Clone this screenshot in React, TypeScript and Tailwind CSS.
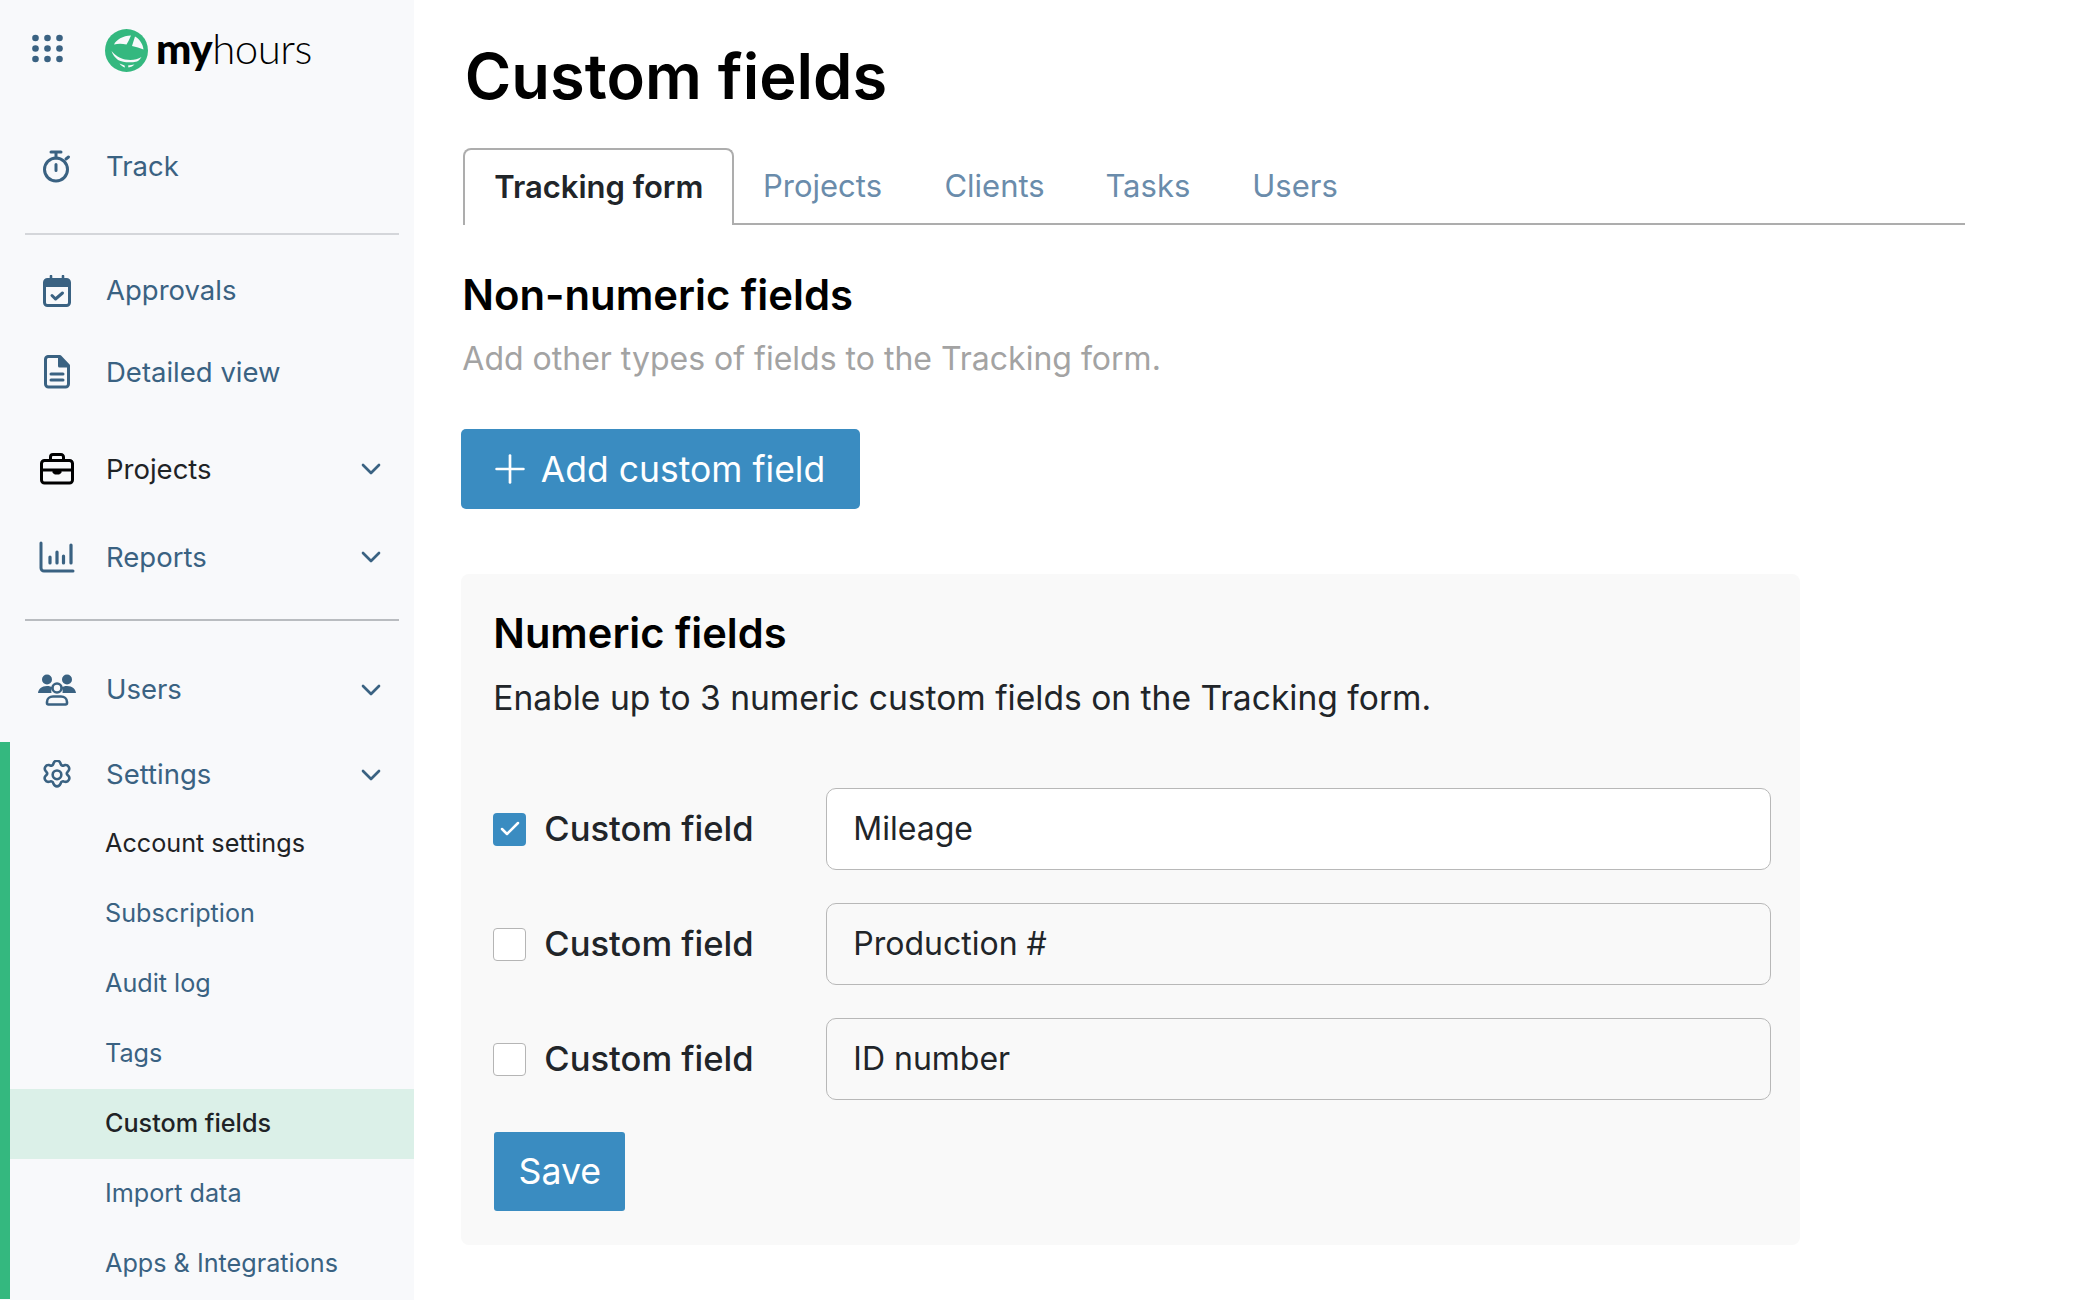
import { ChevronDown, Check, Plus } from "lucide-react";
import { ReactNode } from "react";

const slate = "#3a6282";

function GridIcon() {
  const pts = [0, 1, 2];
  return (
    <svg width="32" height="32" viewBox="0 0 32 32" fill={slate}>
      {pts.map((r) => pts.map((c) => <circle key={`${r}-${c}`} cx={3.5 + c * 12} cy={4 + r * 10.5} r="3.3" />))}
    </svg>
  );
}

function Logo() {
  const bg = "#f8f9fb";
  return (
    <svg width="43" height="43" viewBox="0 0 43 43">
      <circle cx="21.5" cy="21.5" r="21.5" fill="#34b87f" />
      <path d="M9 15.500C11 11 18 6.500 26 6.500L23.500 12 21.500 15.500C17 14.500 13 14.500 9 15.500z" fill={bg} />
      <path d="M30 7.500C34.500 10 38 15 38.500 20.500C35 19 31 18 27 17z" fill={bg} />
      <path d="M6.500 22C10 26 15 29.500 20 30.500C26 31.500 32 31 36.500 28C35 30 34 31.500 32 32.500C25 34 18 33.500 13 31C10 28.500 7.500 25.500 6.500 22z" fill={bg} />
      <path d="M14.500 34.500L19.500 36.500 20 38.500C18 38 16 36.500 14.500 34.500zM23 36.500L29.500 35.500C28 37 26 38 23.500 38.500z" fill={bg} />
    </svg>
  );
}

function Timer() {
  return (
    <svg width="30" height="34" viewBox="0 0 30 34" fill="none" stroke={slate} strokeWidth="3" strokeLinecap="round">
      <circle cx="14" cy="19.500" r="11.500" />
      <path d="M9 2h10M14 2v6M14 14.500v6M24 9l2.500-2" />
    </svg>
  );
}

function CalendarCheck() {
  return (
    <svg width="28" height="32" viewBox="0 0 28 32" fill="none">
      <path d="M8 1v5M20 1v5" stroke={slate} strokeWidth="2.600" strokeLinecap="round" />
      <rect x="1.500" y="4.500" width="25" height="26" rx="3" stroke={slate} strokeWidth="3" />
      <path d="M2 5h24v7H2z" fill={slate} />
      <path d="M9 20.500l3.500 3.500 7-6" stroke={slate} strokeWidth="3" strokeLinecap="round" strokeLinejoin="round" />
    </svg>
  );
}

function DocIcon() {
  return (
    <svg width="26" height="34" viewBox="0 0 26 34" fill="none" stroke={slate} strokeWidth="3" strokeLinejoin="round">
      <path d="M4 1.500h12l8.500 9V29a3 3 0 0 1-3 3H4.500a3 3 0 0 1-3-3V4.500a3 3 0 0 1 2.500-3z" />
      <path d="M15.500 2v9h9" fill={slate} />
      <path d="M7 19h12M7 25h12" strokeLinecap="round" />
    </svg>
  );
}

function Briefcase() {
  return (
    <svg width="34" height="32" viewBox="0 0 34 32" fill="none" stroke="#000" strokeWidth="3" strokeLinejoin="round">
      <rect x="1.500" y="7.500" width="31" height="22.500" rx="3" />
      <path d="M10.500 7V4a2.500 2.500 0 0 1 2.500-2.500h8A2.500 2.500 0 0 1 23.500 4v3" />
      <path d="M2 17h30" />
      <path d="M13 17h8v2.500l-1.500 1.500h-5L13 19.500z" fill="#000" strokeWidth="1" />
    </svg>
  );
}

function Chart() {
  return (
    <svg width="36" height="32" viewBox="0 0 36 32" fill="none" stroke={slate} strokeLinecap="round">
      <path d="M2 2v25a3 3 0 0 0 3 3h29" strokeWidth="3" />
      <path d="M11 16v6M18 11v11M24.500 15v7M32 4v18" strokeWidth="3.200" />
    </svg>
  );
}

function UsersIcon() {
  return (
    <svg width="38" height="32" viewBox="0 0 38 32" fill="none">
      <circle cx="9" cy="5.500" r="5" fill={slate} />
      <circle cx="29" cy="5.500" r="5" fill={slate} />
      <path d="M0 19c.5-4 3.500-7 9-7 2.500 0 4 .5 5.500 1.500-1 1.500-1.500 3-1 5.500z" fill={slate} />
      <path d="M38 19c-.5-4-3.500-7-9-7-2.500 0-4 .5-5.500 1.500 1 1.500 1.500 3 1 5.500z" fill={slate} />
      <circle cx="19" cy="14" r="4.500" stroke={slate} strokeWidth="2.600" />
      <path d="M9 29v-1c0-3.500 3-5.500 6-5.500h8c3 0 6 2 6 5.500v1c0 1-.8 1.500-1.500 1.500h-17C9.800 30.500 9 30 9 29z" stroke={slate} strokeWidth="2.600" />
    </svg>
  );
}

function Gear() {
  return (
    <svg width="28" height="31" viewBox="2.500 0.500 19 21.500" fill="none" stroke={slate} strokeWidth="1.800" strokeLinecap="round" strokeLinejoin="round">
      <path d="M9.670 2.600a2.500 2.500 0 0 1 4.660 0l.3.800a1.600 1.600 0 0 0 2.100.9l.9-.3a2.500 2.500 0 0 1 2.300 4l-.6.700a1.600 1.600 0 0 0 0 2.200l.6.600a2.500 2.500 0 0 1-2.300 4.100l-.9-.2a1.600 1.600 0 0 0-2.100 1l-.3.800a2.500 2.500 0 0 1-4.660 0l-.3-.8a1.600 1.600 0 0 0-2.100-1l-.9.200a2.500 2.500 0 0 1-2.300-4.100l.6-.6a1.600 1.600 0 0 0 0-2.200l-.6-.7a2.500 2.500 0 0 1 2.300-4l.9.300a1.600 1.600 0 0 0 2.100-.9z" />
      <circle cx="12" cy="10.800" r="3" />
    </svg>
  );
}

function NavRow({ icon, label, dark, chevron, h }: { icon: ReactNode; label: string; dark?: boolean; chevron?: boolean; h: string }) {
  return (
    <div className={`flex items-center pl-[37px] pr-[27px] ${h}`}>
      <div className="flex w-[40px] justify-center">{icon}</div>
      <span className={`ml-[29px] flex-1 text-[27.5px] ${dark ? "text-[#1f2326]" : "text-[#3a6282]"}`}>{label}</span>
      {chevron && <ChevronDown className="h-[32px] w-[32px] text-[#3a6282]" strokeWidth={2} />}
    </div>
  );
}

const subItems = ["Account settings", "Subscription", "Audit log", "Tags", "Custom fields", "Import data", "Apps & Integrations"];

function Sidebar() {
  return (
    <aside className="h-[1300px] w-[414px] shrink-0 overflow-hidden bg-[#f8f9fb]">
      <div className="flex h-[100px] items-center pl-[32px]">
        <GridIcon />
        <div className="ml-[41px]"><Logo /></div>
        <div className="-mt-[5px] ml-[8px] flex items-baseline font-['Lato',sans-serif] text-[42px] leading-none tracking-[-0.5px] text-black">
          <span className="font-black">my</span>
          <span className="font-light">hours</span>
        </div>
      </div>
      <NavRow h="h-[133px]" icon={<Timer />} label="Track" />
      <div className="ml-[25px] h-[2px] w-[374px] bg-[#d4d6da]" />
      <div className="h-[14px]" />
      <NavRow h="h-[83.3px]" icon={<CalendarCheck />} label="Approvals" />
      <NavRow h="h-[79.7px]" icon={<DocIcon />} label="Detailed view" />
      <div className="h-[13.5px]" />
      <NavRow h="h-[88px]" icon={<Briefcase />} label="Projects" dark chevron />
      <NavRow h="h-[88px]" icon={<Chart />} label="Reports" chevron />
      <div className="ml-[25px] mt-[17.5px] h-[2px] w-[374px] bg-[#b9bcc0]" />
      <div className="h-[37px]" />
      <NavRow h="h-[64px]" icon={<UsersIcon />} label="Users" chevron />
      <div className="mt-[19.7px] border-l-[10px] border-[#34b87f]">
        <div className="-ml-[10px]">
          <NavRow h="h-[66.7px]" icon={<Gear />} label="Settings" chevron />
        </div>
        {subItems.map((item) => (
          <div
            key={item}
            className={`flex h-[70.1px] items-center pl-[95px] text-[25.2px] ${
              item === "Custom fields" ? "bg-[#dbf0e8] font-medium text-[#1f2326]" : item === "Account settings" ? "text-[#1f2326]" : "text-[#3a6282]"
            }`}
          >
            {item}
          </div>
        ))}
      </div>
    </aside>
  );
}

const tabs = ["Projects", "Clients", "Tasks", "Users"];

function FieldRow({ checked, value, white }: { checked?: boolean; value: string; white?: boolean }) {
  return (
    <div className="flex h-[82px] items-center">
      {checked ? (
        <div className="flex h-[33px] w-[33px] items-center justify-center rounded-[4px] bg-[#3a8cc1]">
          <Check className="h-[24px] w-[24px] text-white" strokeWidth={2.5} />
        </div>
      ) : (
        <div className="h-[33px] w-[33px] rounded-[4px] border-[1.5px] border-[#b5b5b5] bg-white" />
      )}
      <span className="ml-[18px] -mt-[1px] w-[282px] text-[34.6px] font-[550] text-[#212529]">Custom field</span>
      <div className={`flex h-[82px] w-[945px] items-center rounded-[10px] border-[1.5px] border-[#b8b8b8] pl-[26px] text-[32px] text-[#212529] ${white ? "bg-white" : ""}`}>
        {value}
      </div>
    </div>
  );
}

export default function App() {
  return (
    <div className="flex min-h-[1300px] bg-white font-['Inter',sans-serif]">
      <Sidebar />
      <main className="w-[1551px] pl-[48.3px]">
        <div className="flex h-[148px] items-center pl-[2.5px] pt-[4px]">
          <h1 className="text-[63.2px] font-semibold text-black">Custom fields</h1>
        </div>
        <div className="ml-[1px] flex h-[77px] border-b-2 border-[#adadad]">
          <div className="-mb-[2px] flex h-[77px] w-[271px] items-center justify-center rounded-t-[8px] border-2 border-b-0 border-[#adadad] bg-white text-[31px] font-semibold text-[#212529]">
            Tracking form
          </div>
          <div className="flex items-center pl-[28.7px] pt-[2px] text-[31px] text-[#6a8cab]">
            {tabs.map((t, i) => (
              <span key={t} className={i === 0 ? "" : i === 1 ? "ml-[62.4px]" : i === 2 ? "ml-[60.7px]" : "ml-[62px]"}>{t}</span>
            ))}
          </div>
        </div>
        <h2 className="mt-[40px] text-[41.8px] leading-[60px] font-semibold text-black">Non-numeric fields</h2>
        <p className="mt-[10.5px] text-[32px] leading-[46px] text-[#a3a3a3]">Add other types of fields to the Tracking form.</p>
        <button className="-ml-[1px] mt-[47.8px] flex h-[80px] w-[399px] items-center rounded-[5px] bg-[#3a8cc1] pl-[26px] text-[35.5px] text-white">
          <Plus className="h-[46px] w-[46px]" strokeWidth={1.4} />
          <span className="ml-[7.5px]">Add custom field</span>
        </button>
        <section className="-ml-[1px] mt-[64.4px] h-[671px] w-[1339px] rounded-[8px] bg-[#f9f9f9] pl-[32px] pt-[29.3px]">
          <h2 className="text-[41.6px] leading-[60px] font-semibold text-black">Numeric fields</h2>
          <p className="mt-[11.7px] text-[33.6px] leading-[46px] text-[#212529]">Enable up to 3 numeric custom fields on the Tracking form.</p>
          <div className="mt-[67.7px] flex flex-col gap-[33px]">
            <FieldRow checked value="Mileage" white />
            <FieldRow value="Production #" />
            <FieldRow value="ID number" />
          </div>
          <button className="ml-[1px] mt-[32px] h-[79px] w-[131px] rounded-[3px] bg-[#3a8cc1] text-[35.7px] text-white">Save</button>
        </section>
      </main>
    </div>
  );
}
